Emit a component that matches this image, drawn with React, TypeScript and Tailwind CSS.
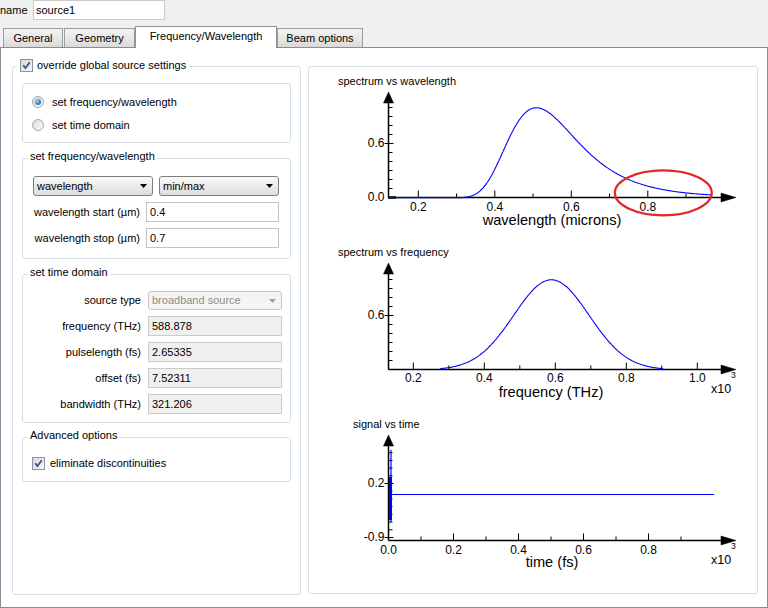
import React from "react";

const FONT = "font-['Liberation_Sans',Arial,sans-serif]";
const SVG_FONT = "Liberation Sans, Arial, sans-serif";

function CheckBox() {
  return (
    <span className="w-[13px] h-[13px] border border-[#8e93a2] bg-linear-to-br from-[#d6d7db] to-[#f8f8f8] flex items-center justify-center shrink-0">
      <svg width="11" height="11" viewBox="0 0 11 11">
        <path d="M2.2 5.2 L4.4 8 L8.8 2.2" fill="none" stroke="#3b4ea3" strokeWidth="1.8" />
      </svg>
    </span>
  );
}

function Radio({ checked }: { checked?: boolean }) {
  return (
    <span className="w-[12px] h-[12px] rounded-full border border-[#a3abb4] bg-linear-to-br from-[#d9d9d9] to-[#fbfbfb] flex items-center justify-center shrink-0">
      {checked && (
        <span className="w-[6px] h-[6px] rounded-full bg-[radial-gradient(circle_at_35%_35%,#9ad6ff,#1463b5_75%)]" />
      )}
    </span>
  );
}

function Combo({ label, className, disabled }: { label: string; className: string; disabled?: boolean }) {
  return (
    <div
      className={`rounded-[3px] border flex items-center pl-[3px] pr-[5px] ${
        disabled
          ? "border-[#c6c6c6] bg-[#f4f4f4] text-[#8d8d8d]"
          : "border-[#7d7d7d] bg-linear-to-b from-[#fafafa] to-[#dddddd]"
      } ${className}`}
    >
      <span className="flex-1">{label}</span>
      <svg width="7" height="4" viewBox="0 0 7 4">
        <path d="M0 0H7L3.5 4Z" fill={disabled ? "#a0a0a0" : "#000"} />
      </svg>
    </div>
  );
}

function Field({ value, readOnly, className }: { value: string; readOnly?: boolean; className: string }) {
  return (
    <div
      className={`h-[20px] border px-[3px] leading-[18px] ${
        readOnly ? "bg-[#f0f0f0] border-[#cbcbcb]" : "bg-white border-[#c4c4c4]"
      } ${className}`}
    >
      {value}
    </div>
  );
}

function Group({ title, className, children }: { title?: React.ReactNode; className: string; children?: React.ReactNode }) {
  return (
    <div className={`relative border border-[#d5dfe5] rounded-[3px] ${className}`}>
      {title && <div className="absolute left-[5px] top-[-9px] px-[2px] bg-white leading-[13px]">{title}</div>}
      {children}
    </div>
  );
}

function Row({ label, children, labelW }: { label: string; children: React.ReactNode; labelW: string }) {
  return (
    <div className="flex items-center">
      <span className={`${labelW} text-right`}>{label}</span>
      {children}
    </div>
  );
}

/* ---------- charts ---------- */

const X0 = 388.5;
const C = 0.29979;
const gauss = (f: number) => Math.exp(-(((f - 0.589) / 0.15) ** 2));

function path(from: number, to: number, step: number, fx: (v: number) => number, fy: (v: number) => number) {
  const pts: string[] = [];
  for (let v = from; v <= to + 1e-9; v += step) pts.push(`${fx(v).toFixed(1)},${fy(v).toFixed(1)}`);
  return "M" + pts.join("L");
}

function Axes({ yB, tip, ys, major, xs, xMajor }: { yB: number; tip: number; ys: number[]; major: number[]; xs: number[]; xMajor: number[] }) {
  return (
    <g stroke="#000" strokeWidth="1.5">
      <line x1={X0} y1={tip + 8} x2={X0} y2={yB} />
      <polygon points={`${X0},${tip} ${X0 - 5},${tip + 11} ${X0 + 5},${tip + 11}`} fill="#000" strokeWidth="0.5" />
      <line x1={X0} y1={yB} x2={728} y2={yB} />
      <polygon points={`736,${yB} 721,${yB - 4.5} 721,${yB + 4.5}`} fill="#000" strokeWidth="0.5" />
      {ys.map((y) => (
        <line key={"y" + y} x1={X0} y1={y} x2={X0 + 4} y2={y} strokeWidth="1" />
      ))}
      {major.map((y) => (
        <line key={"m" + y} x1={X0 - 4} y1={y} x2={X0 + 5} y2={y} strokeWidth="1" />
      ))}
      {xs.map((x) => (
        <line key={"x" + x} x1={x} y1={yB} x2={x} y2={yB - 4} strokeWidth="1" />
      ))}
      {xMajor.map((x) => (
        <line key={"X" + x} x1={x} y1={yB} x2={x} y2={yB - 7} strokeWidth="1" />
      ))}
    </g>
  );
}

function Labels({ items, size = 12, anchor = "middle" }: { items: [number, number, string][]; size?: number; anchor?: "middle" | "end" | "start" }) {
  return (
    <g fontFamily={SVG_FONT} fontSize={size} fill="#000" textAnchor={anchor}>
      {items.map(([x, y, t]) => (
        <text key={t + x + y} x={x} y={y}>
          {t}
        </text>
      ))}
    </g>
  );
}

function Exp({ y }: { y: number }) {
  return (
    <g fontFamily={SVG_FONT} fill="#000">
      <text x={711} y={y} fontSize={12.5}>x10</text>
      <text x={731} y={y - 15} fontSize={8.5}>3</text>
    </g>
  );
}

const range = (n: number, f: (k: number) => number) => Array.from({ length: n }, (_, k) => f(k));

function WavelengthChart() {
  const yB = 197.5;
  const xAt = (l: number) => 418.3 + (l - 0.2) * 382.5;
  return (
    <svg width="448" height="172" viewBox="309 67 448 172">
      <text x={338} y={84.5} fontFamily={SVG_FONT} fontSize={11}>spectrum vs wavelength</text>
      <Axes
        yB={yB}
        tip={92}
        ys={range(10, (k) => yB - 9 * (k + 1))}
        major={[143.5]}
        xs={[0.3, 0.5, 0.7, 0.9].map(xAt)}
        xMajor={[0.2, 0.4, 0.6, 0.8].map(xAt)}
      />
      <line x1={388} y1={197.5} x2={396} y2={197.5} stroke="#000" strokeWidth="2.5" />
      <Labels items={[[384.5, 147.3, "0.6"], [384.5, 200.7, "0.0"]]} anchor="end" />
      <Labels items={[0.2, 0.4, 0.6, 0.8].map((l) => [xAt(l), 211, l.toFixed(1)] as [number, number, string])} />
      <text x={552} y={224.5} fontFamily={SVG_FONT} fontSize={14.6} textAnchor="middle">wavelength (microns)</text>
      <path
        d={path(0.1216, 0.969, 0.002, xAt, (l) => 197.8 - gauss(C / l) * 90)}
        fill="none"
        stroke="#0000ff"
        strokeWidth="1.1"
      />
      <ellipse cx={663.3} cy={192.8} rx={48.5} ry={22.5} fill="none" stroke="#e3262b" strokeWidth="2.2" />
    </svg>
  );
}

function FrequencyChart() {
  const yB = 369.5;
  const xAt = (f: number) => 413.3 + (f - 0.2) * 355;
  return (
    <svg width="448" height="172" viewBox="309 239 448 172">
      <text x={338} y={256} fontFamily={SVG_FONT} fontSize={11}>spectrum vs frequency</text>
      <Axes
        yB={yB}
        tip={263}
        ys={range(10, (k) => yB - 9 * (k + 1))}
        major={[315.5]}
        xs={[0.3, 0.5, 0.7, 0.9].map(xAt)}
        xMajor={[0.2, 0.4, 0.6, 0.8, 1.0].map(xAt)}
      />
      <Labels items={[[384.5, 319.3, "0.6"]]} anchor="end" />
      <Labels items={[0.2, 0.4, 0.6, 0.8, 1.0].map((f) => [xAt(f), 381.7, f.toFixed(1)] as [number, number, string])} />
      <text x={551} y={396.5} fontFamily={SVG_FONT} fontSize={14.6} textAnchor="middle">frequency (THz)</text>
      <Exp y={392.7} />
      <path
        d={path(0.276, 0.904, 0.002, xAt, (f) => 369.8 - gauss(f) * 90)}
        fill="none"
        stroke="#0000ff"
        strokeWidth="1.1"
      />
    </svg>
  );
}

function TimeChart() {
  const yB = 540.5;
  const xAt = (t: number) => 388.5 + t * 325;
  return (
    <svg width="448" height="172" viewBox="309 411 448 172">
      <text x={353} y={428} fontFamily={SVG_FONT} fontSize={11}>signal vs time</text>
      <Axes
        yB={yB}
        tip={435}
        ys={range(13, (k) => 537.5 - 7.71 * k)}
        major={[483.5, 537.5]}
        xs={[0.1, 0.3, 0.5, 0.7, 0.9].map(xAt)}
        xMajor={[0.2, 0.4, 0.6, 0.8].map(xAt)}
      />
      <Labels items={[[384.5, 487.3, "0.2"], [384.5, 540.7, "-0.9"]]} anchor="end" />
      <Labels items={[0, 0.2, 0.4, 0.6, 0.8].map((t) => [xAt(t), 554, t.toFixed(1)] as [number, number, string])} />
      <text x={552} y={567} fontFamily={SVG_FONT} fontSize={14.6} textAnchor="middle">time (fs)</text>
      <Exp y={564} />
      <g stroke="#0000ff" fill="none">
        <line x1={390} y1={494.5} x2={714} y2={494.5} strokeWidth="1.2" />
        <line x1={391} y1={450} x2={391} y2={522} strokeWidth="1.2" />
        <line x1={390.5} y1={477} x2={390.5} y2={520} strokeWidth="3" />
      </g>
    </svg>
  );
}

/* ---------- page ---------- */

const TAB = "h-[19px] border border-b-0 border-[#9c9c9c] bg-linear-to-b from-[#f4f4f4] to-[#dadada] flex items-center justify-center";

export default function App() {
  return (
    <div className={`w-[768px] h-[608px] bg-[#f0f0f0] text-[11px] text-black ${FONT} flex flex-col overflow-hidden`}>
      <div className="h-[26px] flex items-start">
        <span className="w-[33px] leading-[20px]">name</span>
        <div className="w-[132px] h-[20px] bg-white border border-[#cacaca] pl-[2px] leading-[18px]">source1</div>
      </div>

      <div className="h-[21px] flex items-end pl-[3px]">
        <div className={`${TAB} w-[60px]`}>General</div>
        <div className={`${TAB} w-[71px] ml-[1px]`}>Geometry</div>
        <div className="relative z-10 h-[22px] -mb-[1px] w-[142px] border border-b-0 border-[#919191] bg-white flex items-center justify-center pb-[2px]">
          Frequency/Wavelength
        </div>
        <div className={`${TAB} w-[86px]`}>Beam options</div>
      </div>

      <div className="h-[561px] border border-[#898c95] bg-white flex pt-[18px] pl-[11px] gap-[7px]">
        <div className="relative w-[289px] h-[529px] border border-[#d5dfe5] rounded-[3px]">
          <div className="absolute left-[4px] top-[-9px] h-[15px] px-[3px] bg-white flex items-center gap-[4px]">
            <CheckBox />
            <span>override global source settings</span>
          </div>

          <div className="px-[9px] pt-[16px] flex flex-col">
            <Group className="h-[60px]">
              <div className="pt-[10px] pl-[9px] flex flex-col gap-[7px]">
                <div className="h-[16px] flex items-center gap-[8px]">
                  <Radio checked />
                  <span>set frequency/wavelength</span>
                </div>
                <div className="h-[16px] flex items-center gap-[8px]">
                  <Radio />
                  <span>set time domain</span>
                </div>
              </div>
            </Group>

            <Group title="set frequency/wavelength" className="mt-[15px] h-[101px]">
              <div className="pt-[17px] pl-[9px] flex flex-col gap-[6px]">
                <div className="flex gap-[6px] pl-[1px]">
                  <Combo label="wavelength" className="w-[120px] h-[20px]" />
                  <Combo label="min/max" className="w-[120px] h-[20px]" />
                </div>
                <Row label="wavelength start (µm)" labelW="w-[114px] pr-[6px]">
                  <Field value="0.4" className="w-[133px]" />
                </Row>
                <Row label="wavelength stop (µm)" labelW="w-[114px] pr-[6px]">
                  <Field value="0.7" className="w-[133px]" />
                </Row>
              </div>
            </Group>

            <Group title="set time domain" className="mt-[15px] h-[149px]">
              <div className="pt-[16px] flex flex-col gap-[6px]">
                <Row label="source type" labelW="w-[125px] pr-[7px]">
                  <Combo label="broadband source" className="w-[134px] h-[19px]" disabled />
                </Row>
                <Row label="frequency (THz)" labelW="w-[125px] pr-[7px]">
                  <Field value="588.878" readOnly className="w-[134px]" />
                </Row>
                <Row label="pulselength (fs)" labelW="w-[125px] pr-[7px]">
                  <Field value="2.65335" readOnly className="w-[134px]" />
                </Row>
                <Row label="offset (fs)" labelW="w-[125px] pr-[7px]">
                  <Field value="7.52311" readOnly className="w-[134px]" />
                </Row>
                <Row label="bandwidth (THz)" labelW="w-[125px] pr-[7px]">
                  <Field value="321.206" readOnly className="w-[134px]" />
                </Row>
              </div>
            </Group>

            <Group title="Advanced options" className="mt-[14px] h-[45px]">
              <div className="pt-[19px] pl-[9px] flex items-center gap-[5px]">
                <CheckBox />
                <span className="leading-[13px]">eliminate discontinuities</span>
              </div>
            </Group>
          </div>
        </div>

        <div className="w-[450px] h-[528px] border border-[#d5dfe5] rounded-[3px] flex flex-col">
          <WavelengthChart />
          <FrequencyChart />
          <TimeChart />
        </div>
      </div>
    </div>
  );
}
